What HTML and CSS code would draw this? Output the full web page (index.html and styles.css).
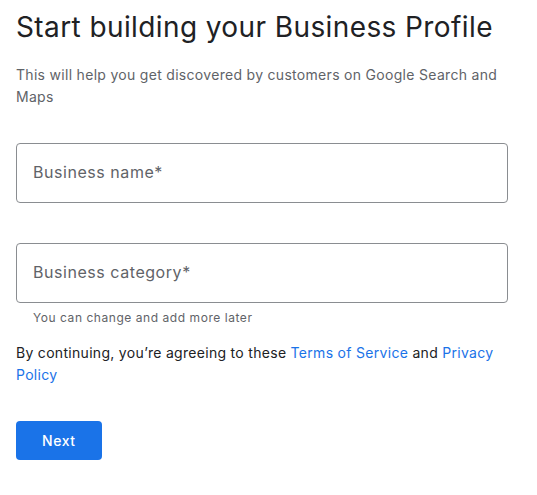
FILE: index.html
```html
<!DOCTYPE html>
<html lang="en">
<head>
<meta charset="utf-8">
<title>Start building your Business Profile</title>
<link rel="stylesheet" href="styles.css">
</head>
<body>
<main class="page">
  <h1 class="title">Start building your Business Profile</h1>
  <p class="subtitle">This will help you get discovered by customers on Google Search and Maps</p>
  <form class="form">
    <div class="field">
      <span class="field-label">Business name*</span>
    </div>
    <div class="field-group">
      <div class="field">
        <span class="field-label">Business category*</span>
      </div>
      <div class="helper">You can change and add more later</div>
    </div>
  </form>
  <p class="terms">By continuing, you’re agreeing to these <a class="link" href="#">Terms of Service</a> and <a class="link" href="#">Privacy Policy</a></p>
  <div class="actions">
    <button class="btn-primary" type="button">Next</button>
  </div>
</main>
</body>
</html>
```

FILE: styles.css
```css
html, body {
  margin: 0;
  padding: 0;
  background: #ffffff;
}

body {
  font-family: Inter, Roboto, "Liberation Sans", Arial, sans-serif;
  color: #202124;
}

.page {
  width: 492px;
  padding: 9px 16px 0 16px;
  display: flex;
  flex-direction: column;
}

.title {
  margin: 0;
  font-size: 28px;
  line-height: 36px;
  font-weight: 400;
  letter-spacing: 0.4px;
  color: #202124;
}

.subtitle {
  margin: 19px 0 0 0;
  font-size: 14px;
  line-height: 22px;
  letter-spacing: 0.3px;
  color: #5f6368;
}

.form {
  margin-top: 35px;
  display: flex;
  flex-direction: column;
  gap: 40px;
}

.field {
  box-sizing: border-box;
  height: 60px;
  border: 1px solid #8a8d91;
  border-radius: 4px;
  padding: 16px 16px 0 16px;
}

.field-label {
  display: block;
  font-size: 16px;
  line-height: 24px;
  letter-spacing: 0.55px;
  color: #5f6368;
}

.helper {
  margin-top: 7px;
  padding-left: 17px;
  font-size: 12px;
  line-height: 16px;
  letter-spacing: 0.55px;
  color: #5f6368;
}

.terms {
  margin: 16px 0 0 0;
  font-size: 14px;
  line-height: 22px;
  letter-spacing: 0.3px;
  color: #202124;
}

.link {
  color: #1a73e8;
  text-decoration: none;
}

.actions {
  margin-top: 35px;
  display: flex;
}

.btn-primary {
  height: 39px;
  padding: 0 26px;
  border: none;
  border-radius: 4px;
  background: #1a73e8;
  color: #ffffff;
  font-family: Inter, Roboto, "Liberation Sans", Arial, sans-serif;
  font-size: 14px;
  font-weight: 500;
  letter-spacing: 0.6px;
  cursor: pointer;
}
```
